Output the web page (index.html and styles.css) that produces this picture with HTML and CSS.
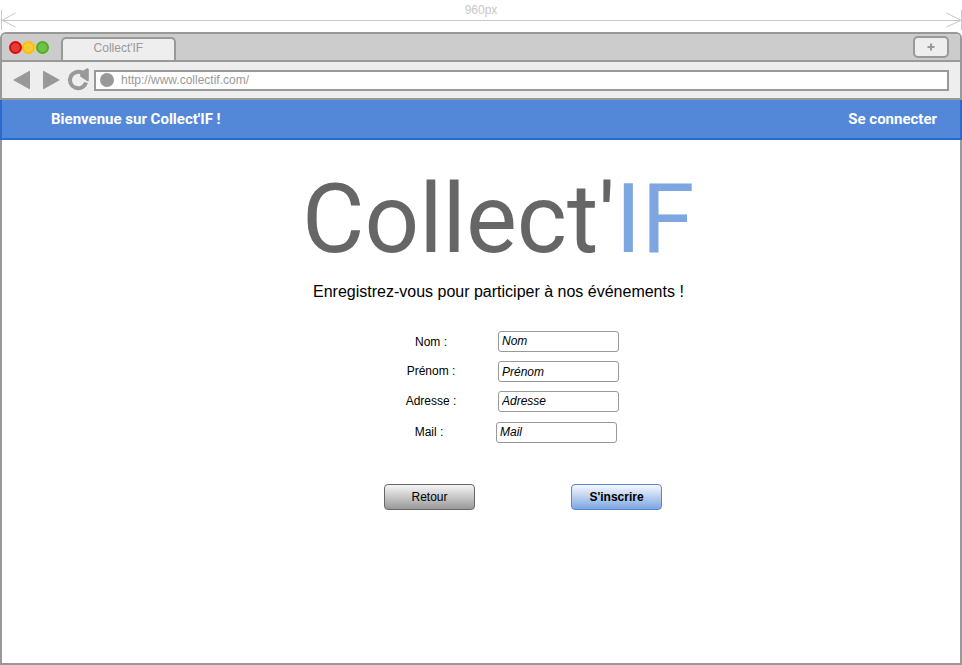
FILE: index.html
```html
<!DOCTYPE html>
<html lang="fr">
<head>
<meta charset="utf-8">
<title>Collect'IF</title>
<link rel="stylesheet" href="styles.css">
</head>
<body>
<div class="ruler">
  <span class="ruler-label">960px</span>
  <svg class="ruler-line" width="962" height="22" viewBox="0 0 962 22" fill="none" stroke="#c8c8c8">
    <path d="M1.5 0V20M961.5 0V20M2 10.5H961M15.5 3L2 10.3L15.5 17M946.500 3L961 10.300L946.500 17"/>
  </svg>
</div>
<div class="window">
  <div class="titlebar">
    <span class="dot red"></span><span class="dot yellow"></span><span class="dot green"></span>
    <div class="tab">Collect'IF</div>
    <div class="newtab"><svg width="8" height="8" viewBox="0 0 8 8"><path d="M4 .5V7.500M.5 4H7.500" stroke="#999" stroke-width="2"/></svg></div>
  </div>
  <div class="toolbar">
    <svg class="nav" width="92" height="36" viewBox="2 62 92 36">
      <path fill="#999" d="M13 80L30 70.500V89.500ZM60 80L43 70.500V89.500Z"/>
      <path fill="none" stroke="#999" stroke-width="4" d="M82 72.800A8.200 8.200 0 1 0 86 82.500"/>
      <path fill="#999" d="M79 70.500H83.500L86.500 68.500Q88.800 67.500 88.800 70V80Q88.800 82 87 81L80.500 76.800Q79.500 75.800 80.500 75Z"/>
    </svg>
    <div class="url"><span class="favicon"></span>http://www.collectif.com/</div>
  </div>
  <header class="banner"><span>Bienvenue sur Collect'IF !</span><span class="login">Se connecter</span></header>
  <main>
    <h1>Collect'<span>IF</span></h1>
    <p class="intro">Enregistrez-vous pour participer à nos événements !</p>
    <form class="fields">
      <div class="row nom"><label for="nom">Nom :</label><input id="nom" placeholder="Nom"></div>
      <div class="row prenom"><label for="prenom">Prénom :</label><input id="prenom" placeholder="Prénom"></div>
      <div class="row adresse"><label for="adresse">Adresse :</label><input id="adresse" placeholder="Adresse"></div>
      <div class="row mail"><label for="mail">Mail :</label><input id="mail" placeholder="Mail"></div>
      <div class="actions"><button type="button">Retour</button><button type="button" class="primary">S'inscrire</button></div>
    </form>
  </main>
</div>
</body>
</html>
```
FILE: styles.css
```css
* { box-sizing: border-box; }
body {
  margin: 0;
  width: 962px;
  height: 665px;
  overflow: hidden;
  background: #fff;
  color: #000;
  font: 12px/14px "Liberation Sans", Arial, sans-serif;
}
.ruler { height: 32px; position: relative; text-align: center; color: #c8c8c8; padding-top: 3px; }
.ruler-label { display: block; }
.ruler-line { position: absolute; left: 0; top: 10px; }
.window {
  height: 633px;
  border: 2px solid #999;
  border-radius: 6px 6px 0 0;
  background: #fff;
}
.titlebar {
  height: 28px;
  display: flex;
  align-items: center;
  padding-left: 7px;
  background: #ccc;
  border-bottom: 2px solid #999;
  border-radius: 4px 4px 0 0;
}
.dot { width: 13px; height: 13px; margin-right: .3px; border-radius: 50%; border: 2px solid; }
.red { background: #e33b36; border-color: #dd0a0a; }
.yellow { background: #ffca38; border-color: #ffbd05; }
.green { background: #75bf49; border-color: #4eb01b; }
.tab {
  align-self: flex-end;
  width: 115px;
  height: 23px;
  margin-left: 12px;
  padding-top: 2px;
  border: 2px solid #999;
  border-bottom: 0;
  border-radius: 5px 5px 0 0;
  background: #eee;
  color: #999;
  text-align: center;
}
.newtab {
  width: 36px;
  height: 22px;
  margin: 0 11px 0 auto;
  padding-bottom: 1px;
  display: flex;
  align-items: center;
  justify-content: center;
  border: 2px solid #999;
  border-radius: 5px;
  background: #eee;
}
.toolbar { height: 38px; display: flex; background: #eee; border-bottom: 2px solid #999; }
.nav { flex: none; }
.url {
  flex: 1;
  height: 21px;
  margin: 8px 11px 0 0;
  padding-bottom: 2px;
  display: flex;
  align-items: center;
  border: 2px solid #999;
  background: #fff;
  color: #999;
}
.favicon { width: 14px; height: 14px; margin: 1px 7px 0 4px; border-radius: 50%; background: #999; }
.banner {
  height: 40px;
  margin: 0 -2px;
  padding: 0 23px 0 49px;
  display: flex;
  justify-content: space-between;
  align-items: center;
  background: #5388d8;
  border: 2px solid #286acd;
  border-top: 0;
  color: #fff;
  font: bold 15px/18px Roboto, sans-serif;
}
h1 { margin: 23px 0 0 300px; font: 96px/112px Roboto, sans-serif; color: #666; white-space: nowrap; }
h1 span { color: #7ea6e0; }
.intro { margin: 7px 0 0 311px; font-size: 16px; line-height: 20px; white-space: nowrap; }
.fields { margin: 29px 0 0 382px; width: 280px; }
.row { display: flex; height: 21px; margin-bottom: 9px; }
.row label { width: 94px; margin-right: 20px; padding-top: 3px; text-align: center; }
.row input {
  width: 121px;
  height: 21px;
  padding: 0 3px;
  border: 1px solid #999;
  border-radius: 3px;
  background: #fff;
  font: italic 12px/14px "Liberation Sans", Arial, sans-serif;
}
input::placeholder { color: #000; opacity: 1; }
.nom label { padding-top: 4px; }
.nom input, .adresse input, .mail input { padding-bottom: 1px; }
.mail { margin-top: 10px; }
.mail label { width: 90px; margin-right: 22px; }
.actions { display: flex; justify-content: space-between; width: 278px; margin-top: 41px; }
button {
  width: 91px;
  height: 26px;
  padding: 0;
  border: 1px solid #666;
  border-radius: 4px;
  background: linear-gradient(#f5f5f5, #999);
  color: #000;
  font: 12px/14px "Liberation Sans", Arial, sans-serif;
}
.primary { border-color: #5388d8; background: linear-gradient(#f5f8fd, #7ea6e0); font-weight: bold; }
```
